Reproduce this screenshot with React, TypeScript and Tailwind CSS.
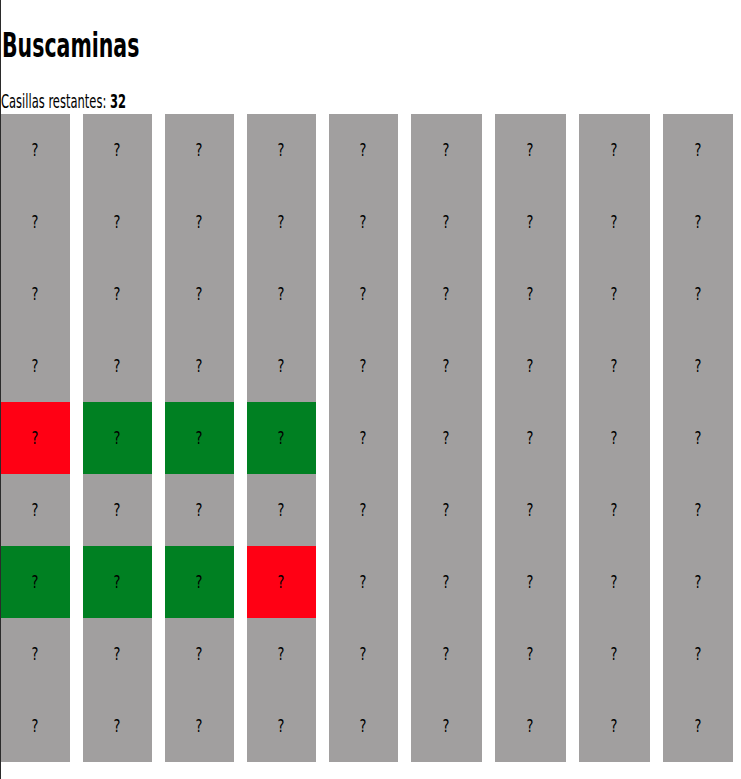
import React from "react";

type Cell = "hidden" | "safe" | "mine";

const ROWS = 9;
const COLS = 9;

// revealed cells on the board: [row, col, state]
const revealed: [number, number, Cell][] = [
  [4, 0, "mine"],
  [4, 1, "safe"],
  [4, 2, "safe"],
  [4, 3, "safe"],
  [6, 0, "safe"],
  [6, 1, "safe"],
  [6, 2, "safe"],
  [6, 3, "mine"],
];

function cellState(r: number, c: number): Cell {
  const hit = revealed.find(([rr, cc]) => rr === r && cc === c);
  return hit ? hit[2] : "hidden";
}

const cellColor: Record<Cell, string> = {
  hidden: "bg-[#a19f9f]",
  safe: "bg-[#008022]",
  mine: "bg-[#ff0014]",
};

export default function App() {
  const font = {
    fontFamily: '"DejaVu Sans", "Liberation Sans", sans-serif',
  };

  return (
    <div
      className="min-h-[779px] w-[741px] border-l border-[#2b2b2b] bg-white font-stretch-condensed text-black"
      style={font}
    >
      <h1 className="pt-[25px] pl-px text-[34px] font-bold leading-[40px]">
        <span className="inline-block origin-left scale-x-[0.67]">Buscaminas</span>
      </h1>
      <p className="mt-[24px] text-[20px] leading-[24px]">
        <span className="inline-block origin-left scale-x-[0.64]">
          Casillas restantes: <b>32</b>
        </span>
      </p>

      <div className="mt-px grid grid-cols-[69px_69px_69px_69px_69px_71px_71px_71px_70px] gap-x-[13px]">
        {Array.from({ length: ROWS }).map((_, r) =>
          Array.from({ length: COLS }).map((_, c) => {
            const s = cellState(r, c);
            return (
              <div
                key={`${r}-${c}`}
                className={`flex h-[72px] items-center justify-center text-[17px] leading-none ${cellColor[s]}`}
              >
                <span className="inline-block scale-x-[0.85]">?</span>
              </div>
            );
          })
        )}
      </div>
    </div>
  );
}
